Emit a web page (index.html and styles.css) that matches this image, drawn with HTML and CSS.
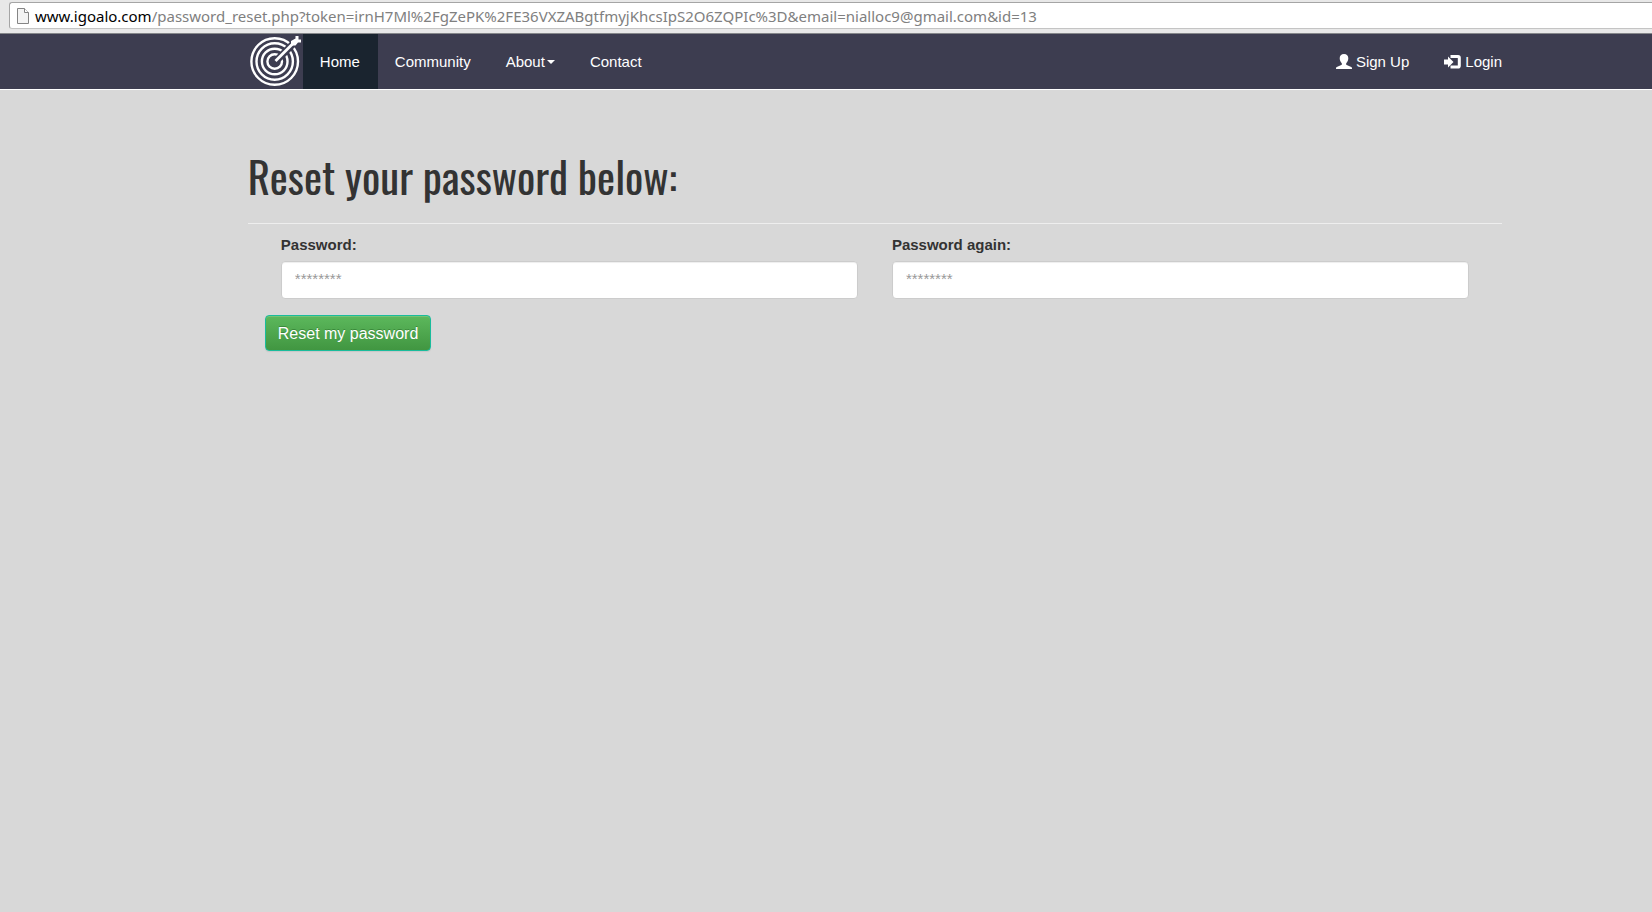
FILE: index.html
```html
<!DOCTYPE html>
<html lang="en">
<head>
<meta charset="utf-8">
<meta name="viewport" content="width=device-width, initial-scale=1">
<title>Reset your password</title>
<link rel="stylesheet" href="styles.css">
</head>
<body>
<div class="browser-bar">
  <div class="address">
    <svg class="page-icon" width="12" height="16" viewBox="0 0 12 16" aria-hidden="true">
      <path d="M.5.5h7l4 4v11H.5z" fill="#f4f4f4" stroke="#858585"/>
      <path d="M7.5.5v4h4" fill="#fff" stroke="#858585"/>
    </svg>
    <span class="url"><span class="host">www.igoalo.com</span>/password_reset.php?token=irnH7Ml%2FgZePK%2FE36VXZABgtfmyjKhcsIpS2O6ZQPIc%3D&amp;email=nialloc9@gmail.com&amp;id=13</span>
  </div>
</div>
<header class="navbar">
  <nav class="container nav-inner" aria-label="Main">
    <a class="brand" href="#" aria-label="igoalo home">
      <svg width="55" height="55" viewBox="0 0 55 55" aria-hidden="true">
        <g fill="none" stroke="#fff" stroke-width="2.4">
          <circle cx="26.700" cy="27.500" r="23.300"/>
          <circle cx="26.700" cy="27.500" r="18.200"/>
          <circle cx="26.700" cy="27.500" r="12.800"/>
          <circle cx="26.700" cy="27.500" r="7.300"/>
        </g>
        <path d="M30 25 48 7" stroke="#3d3d50" stroke-width="7"/>
        <path d="M27.500 27 47 7.500" stroke="#fff" stroke-width="2.800"/>
        <path d="M43 7 47.500 4.500 47.500 2h3v3.500H53v3H50L47.500 11.500H43z" fill="#fff"/>
      </svg>
    </a>
    <a class="nav-link active" href="#" aria-current="page">Home</a>
    <a class="nav-link" href="#">Community</a>
    <a class="nav-link" href="#">About<span class="caret"></span></a>
    <a class="nav-link" href="#">Contact</a>
    <a class="nav-link signup" href="#">
      <svg class="glyph" width="16" height="16" viewBox="0 0 16 16" aria-hidden="true">
        <path fill="#fff" d="M8 0c2.800 0 4.300 1.700 4.300 4.300 0 2-.9 3.900-2.100 5v1.400l5 2.300c.6.300.8.700.8 1.300V15H0V14.300c0-.6.2-1 .8-1.300L5.800 10.700V9.300c-1.200-1.100-2.100-3-2.100-5C3.700 1.700 5.200 0 8 0z"/>
      </svg>
      Sign Up
    </a>
    <a class="nav-link" href="#">
      <svg class="glyph" width="17" height="16" viewBox="0 0 17 16" aria-hidden="true">
        <path fill="#fff" d="M0 5.500h4V2.500L9.500 8 4 13.500v-3H0z"/>
        <path fill="none" stroke="#fff" stroke-width="3" d="M6.500 2.500H14Q15.300 2.500 15.300 3.800V11.700Q15.300 13 14 13H6.500"/>
      </svg>
      Login
    </a>
  </nav>
</header>
<main class="container">
  <h1 class="title">Reset your password below:</h1>
  <form class="reset-form">
    <div class="fields">
      <div class="field">
        <label for="password">Password:</label>
        <input id="password" type="password" placeholder="********">
      </div>
      <div class="field">
        <label for="password-again">Password again:</label>
        <input id="password-again" type="password" placeholder="********">
      </div>
    </div>
    <button class="submit" type="button">Reset my password</button>
  </form>
</main>
</body>
</html>
```

FILE: styles.css
```css
* {
  box-sizing: border-box;
}

body {
  margin: 0;
  min-height: 100vh;
  background: #d8d8d8;
  color: #333;
  font: 15px/22px "Liberation Sans", Arial, sans-serif;
}

.container {
  margin: 0 150px 0 15%;
}

.browser-bar {
  padding: 2px 0 4px 9px;
  background: #e8e8e8;
  border-bottom: 1px solid #85878a;
}

.address {
  display: flex;
  align-items: center;
  gap: 6px;
  height: 27px;
  padding-left: 7px;
  background: #fff;
  border: 1px solid #a5a5a5;
  border-bottom-color: #c4c4c4;
  border-right: 0;
  border-radius: 3px 0 0 3px;
  overflow: hidden;
}

.url {
  color: #808080;
  font: 15px/24px "Noto Sans", "Open Sans", sans-serif;
  white-space: nowrap;
}

.host {
  color: #000;
}

.navbar {
  background: #3d3d50;
  border-bottom: 1px solid #fff;
}

.nav-inner {
  display: flex;
}

.brand {
  height: 55px;
}

.nav-link {
  display: flex;
  align-items: center;
  padding: 0 18px 0 17px;
  color: #fff;
  text-decoration: none;
  white-space: nowrap;
}

.nav-link.active {
  background: #1a242f;
}

.nav-link:last-child {
  padding-right: 0;
}

.signup {
  margin-left: auto;
}

.glyph {
  margin-right: 4px;
}

.caret {
  margin-left: 2px;
  border: 4px solid transparent;
  border-top-color: #fff;
  border-bottom: 0;
}

.title {
  margin: 0;
  padding: 58px 0 19px;
  border-bottom: 1px solid #eee;
  color: #333;
  font: 43px/56px Oswald, "Liberation Sans Narrow", "Roboto Condensed", "Open Sans Condensed", "Liberation Sans", sans-serif;
}

.reset-form {
  padding: 10px 17px;
}

.fields {
  display: grid;
  grid-template-columns: 1fr 1fr;
  gap: 34px;
  padding: 0 16px;
}

.field label {
  display: block;
  margin-bottom: 5px;
  font-weight: bold;
}

.field input {
  display: block;
  width: 100%;
  height: 38px;
  padding: 4px 13px 8px;
  background: #fff;
  border: 1px solid #ccc;
  border-radius: 4px;
  box-shadow: inset 0 1px 1px #eee;
  color: #555;
  font: inherit;
}

.field input::placeholder {
  color: #999;
  opacity: 1;
}

.submit {
  margin-top: 16px;
  padding: 7px 12px 5px;
  background: linear-gradient(#5cb85c, #419641);
  border: 1px solid #1abc9c;
  border-radius: 4px;
  box-shadow: inset 0 1px 0 #74c374, 0 1px 1px #c8c8c8;
  color: #fff;
  font: inherit;
  font-size: 16px;
  text-shadow: 0 -1px 0 #3a8a3a;
}
```
